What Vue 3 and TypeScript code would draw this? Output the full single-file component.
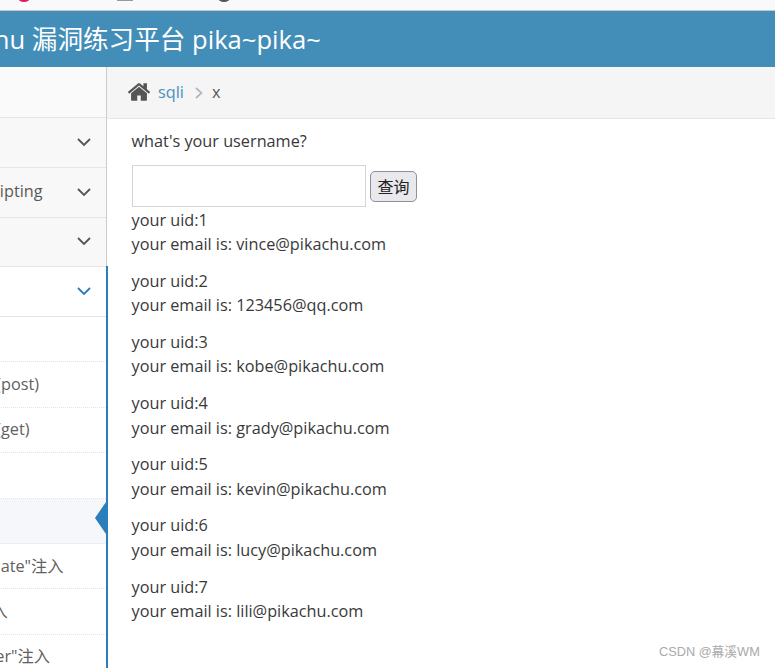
<script setup lang="ts">
interface MenuItem {
  label: string;
  open?: boolean;
}

interface SubItem {
  label: string;
  active?: boolean;
}

interface UserRow {
  uid: number;
  email: string;
}

const topMenus: MenuItem[] = [
  { label: "暴力破解" },
  { label: "Cross-Site Scripting" },
  { label: "CSRF" },
  { label: "SQL-Inject", open: true },
];

const subMenus: SubItem[] = [
  { label: "概述" },
  { label: "数字型注入(post)" },
  { label: "字符型注入(get)" },
  { label: "搜索型注入" },
  { label: "xx型注入", active: true },
  { label: "\"insert/update\"注入" },
  { label: "\"delete\"注入" },
  { label: "\"http header\"注入" },
];

const users: UserRow[] = [
  { uid: 1, email: "vince@pikachu.com" },
  { uid: 2, email: "123456@qq.com" },
  { uid: 3, email: "kobe@pikachu.com" },
  { uid: 4, email: "grady@pikachu.com" },
  { uid: 5, email: "kevin@pikachu.com" },
  { uid: 6, email: "lucy@pikachu.com" },
  { uid: 7, email: "lili@pikachu.com" },
];
</script>

<template>
  <div class="window">
    <div class="tabstrip">
      <span class="dot pink"></span>
      <span class="dot grey"></span>
      <span class="dot dark"></span>
    </div>

    <div class="page">
      <header class="navbar">Pikachu 漏洞练习平台 pika~pika~</header>

      <div class="body-row">
        <aside class="sidebar">
          <div class="shortcuts"></div>
          <div
            v-for="menu in topMenus"
            :key="menu.label"
            class="menu-row"
            :class="{ open: menu.open }">
            <span class="menu-label">{{ menu.label }}</span>
            <svg class="chevron" viewBox="0 0 14 9" width="14" height="9">
              <path d="M1 1l6 6 6-6" fill="none" stroke="currentColor" stroke-width="1.800" />
            </svg>
          </div>
          <ul class="submenu">
            <li
              v-for="sub in subMenus"
              :key="sub.label"
              class="sub-row"
              :class="{ active: sub.active }">
              <span>{{ sub.label }}</span>
            </li>
          </ul>
        </aside>

        <main class="content">
          <nav class="breadcrumbs">
            <svg class="home" viewBox="97 190 1598 1346" width="22" height="19">
              <path
                fill="#555"
                d="M1472 992v480q0 26-19 45t-45 19h-384v-384H768v384H384q-26 0-45-19t-19-45V992q0-1 .5-3t.5-3l575-474 575 474q1 2 1 6zm223-69l-62 74q-8 9-21 11h-3q-13 0-21-7L896 424l-692 577q-12 8-24 7-13-2-21-11l-62-74q-8-10-7-23.500t11-21.500l719-599q32-26 76-26t76 26l244 204V288q0-14 9-23t23-9h192q14 0 23 9t9 23v408l219 182q10 8 11 21.500t-7 23.500z" />
            </svg>
            <a class="crumb-link">sqli</a>
            <svg class="crumb-sep" viewBox="0 0 8 12" width="8" height="12">
              <path d="M1 1l5.500 5L1 11" fill="none" stroke="#b2b6bf" stroke-width="1.700" />
            </svg>
            <span class="crumb-current">x</span>
          </nav>

          <div class="page-content">
            <p class="question">what's your username?</p>
            <form class="search" @submit.prevent>
              <input class="search-input" type="text" />
              <button class="search-btn" type="submit">查询</button>
            </form>
            <p v-for="user in users" :key="user.uid" class="result">
              your uid:{{ user.uid }}<br />
              your email is: {{ user.email }}
            </p>
          </div>
        </main>
      </div>
    </div>

    <div class="watermark">CSDN @幕溪WM</div>
  </div>
</template>

<style scoped>
.window {
  position: relative;
  width: 775px;
  height: 668px;
  overflow: hidden;
  background: #fff;
  font-family: "Open Sans", "Noto Sans CJK SC", sans-serif;
  color: #393939;
}

.tabstrip {
  position: relative;
  height: 10px;
  background: #f9f9fb;
  border-bottom: 1px solid #c8c8c8;
}

.dot {
  position: absolute;
  top: -6px;
  width: 12px;
  height: 8px;
  border-radius: 50%;
}

.dot.pink {
  left: 18px;
  background: #e8175d;
}

.dot.grey {
  left: 117px;
  top: -7px;
  width: 16px;
  border-radius: 0;
  background: #9a9a9a;
}

.dot.dark {
  left: 218px;
  background: #555;
}

.navbar {
  height: 56px;
  padding-bottom: 3px;
  box-sizing: border-box;
  margin-left: -68px;
  display: flex;
  align-items: center;
  white-space: nowrap;
  background: #438eb9;
  color: #fff;
  font-size: 25.600px;
}

.page {
  width: 775px;
}

.body-row {
  display: flex;
  margin-left: -130px;
}

.sidebar {
  flex: none;
  width: 236px;
  height: 601px;
  overflow: hidden;
  background: #f2f2f2;
  border-right: 1px solid #ccc;
  font-size: 16.250px;
  color: #585858;
}

.shortcuts {
  height: 50px;
  background: #fafafa;
  border-bottom: 1px solid #e5e5e5;
}

.menu-row {
  display: flex;
  align-items: center;
  justify-content: space-between;
  height: 49.750px;
  padding: 0 15px 0 27px;
  box-sizing: border-box;
  background: #f8f8f8;
  border-bottom: 1px solid #e5e5e5;
  color: #585858;
  white-space: nowrap;
}

.menu-label {
  padding-bottom: 2px;
}

.menu-row.open {
  position: relative;
  background: #fff;
  color: #2b7dbc;
}

.chevron {
  flex: none;
  color: #555;
}

.menu-row.open .chevron {
  color: #2b7dbc;
}

.submenu {
  margin: 0;
  padding: 0;
  list-style: none;
  background: #fff;
}

.sub-row {
  position: relative;
  display: flex;
  align-items: center;
  height: 45.400px;
  padding: 0 0 3px 45px;
  box-sizing: border-box;
  border-bottom: 1px dotted #e4e4e4;
  white-space: nowrap;
  color: #616161;
}

.sub-row.active {
  background: #f5f7fa;
}

/* blue notch on the active entry */
.sub-row.active::after {
  content: "";
  position: absolute;
  right: 0;
  top: 3px;
  border: 16.500px solid transparent;
  border-left-width: 0;
  border-right: 11px solid #2b7dbc;
}

.content {
  flex: 1;
  min-width: 0;
  position: relative;
}

.sidebar + .content::before {
  content: "";
  position: absolute;
  left: -1px;
  top: 199px;
  bottom: 0;
  width: 2px;
  background: #2b7dbc;
}

.breadcrumbs {
  display: flex;
  align-items: center;
  height: 52px;
  box-sizing: border-box;
  padding: 0 0 2px 21px;
  background: #f5f5f5;
  border-bottom: 1px solid #e5e5e5;
  font-size: 16.250px;
}

.home {
  margin-right: 8px;
}

.crumb-link {
  color: #4c8fbd;
}

.crumb-sep {
  margin: 3px 9px 0 11px;
}

.crumb-current {
  color: #555;
}

.page-content {
  padding: 10px 0 0 24.500px;
  font-size: 16.250px;
  line-height: 24.375px;
  color: #393939;
}

.page-content p {
  margin: 0 0 12.400px;
}

.search {
  display: flex;
  align-items: center;
  gap: 4px;
  margin: -1px 0 1px 0.500px;
}

.search-input {
  width: 234px;
  height: 42px;
  box-sizing: border-box;
  border: 1px solid #d5d5d5;
  background: #fff;
}

.search-btn {
  width: 47px;
  height: 31px;
  margin-top: 1px;
  box-sizing: border-box;
  padding: 0;
  border: 1px solid #8f8f9d;
  border-radius: 5px;
  background: #e9e9ed;
  color: #222;
  font-family: "Noto Sans CJK SC", sans-serif;
  font-size: 16px;
}

.watermark {
  position: absolute;
  left: 659px;
  top: 643px;
  font-family: "Liberation Sans", "Noto Sans CJK SC", sans-serif;
  font-size: 12.750px;
  line-height: 18px;
  color: #aaa;
  white-space: nowrap;
}
</style>
